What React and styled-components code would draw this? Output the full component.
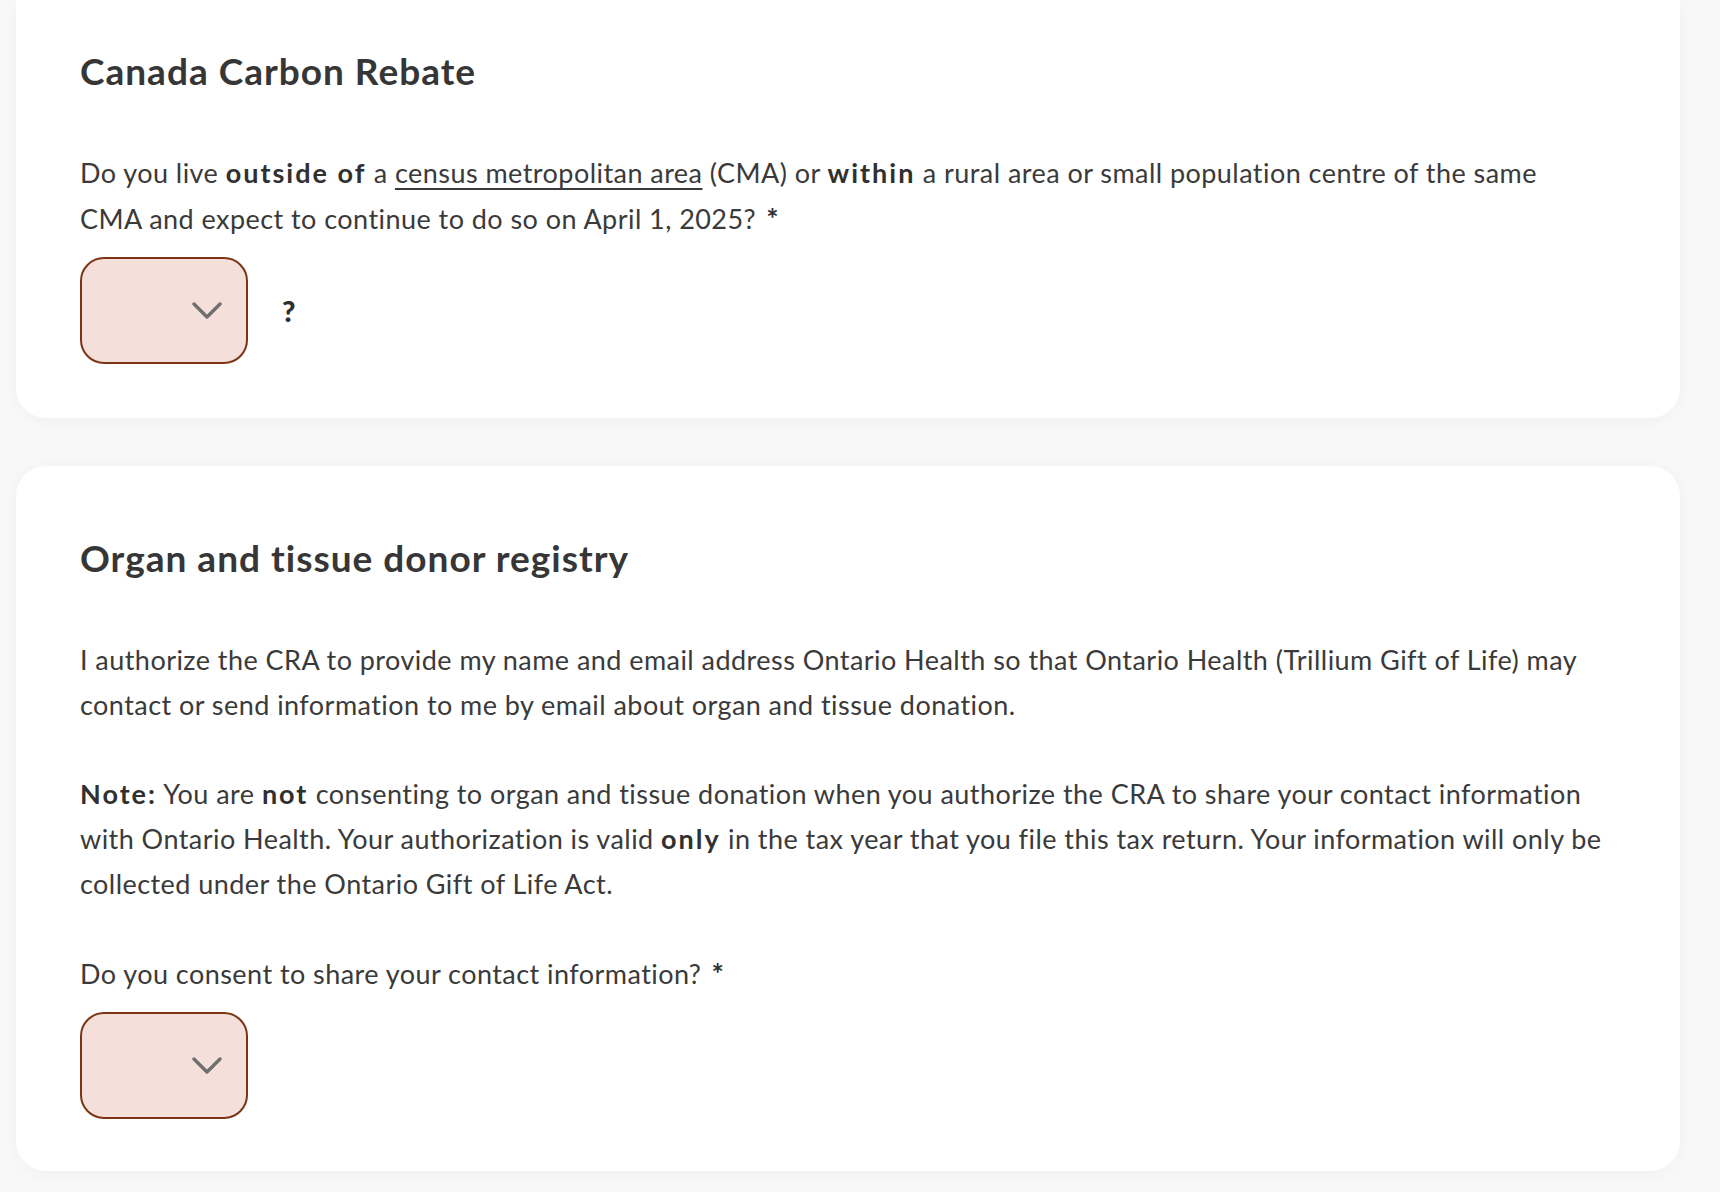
import React from 'react';
import styled, { createGlobalStyle } from 'styled-components';

const GlobalStyle = createGlobalStyle`
	html, body {
		margin: 0;
		padding: 0;
		background: #f8f8f8;
	}
	body {
		font-family: 'Lato', 'Noto Sans', sans-serif;
		color: #3a3a3a;
	}
`;

const Page = styled.div`
	display: flex;
	flex-direction: column;
	gap: 48px;
	padding: 0 40px 22px 16px;
	min-height: 1192px;
	box-sizing: border-box;
`;

const Card = styled.section`
	background: #ffffff;
	border-radius: ${(props) => (props.cut ? '0 0 30px 30px' : '30px')};
	box-shadow: 0 2px 18px rgba(0, 0, 0, 0.035);
	padding: ${(props) => (props.cut ? '47px 64px 54px' : '68px 64px 52px')};
`;

const Title = styled.h2`
	margin: 0 0 55px 0;
	font-size: 37px;
	line-height: 48px;
	font-weight: 700;
	color: #363636;
	letter-spacing: 1px;
`;

const Text = styled.p`
	margin: 0 0 ${(props) => props.gap || 44}px 0;
	font-size: 27px;
	line-height: 45px;
	font-weight: 400;
	letter-spacing: 0.45px;

	b {
		font-weight: 700;
		color: #303030;
		letter-spacing: 2px;
	}

	a {
		color: inherit;
		text-decoration: underline;
		text-decoration-thickness: 2px;
		text-underline-offset: 5px;
	}
`;

const Required = styled.b`
	margin-left: 10px;
	font-size: 29px;
	font-weight: 900;
`;

const FieldRow = styled.div`
	display: flex;
	align-items: center;
	gap: 34px;
`;

const SelectBox = styled.div`
	width: 168px;
	height: 107px;
	box-sizing: border-box;
	border: 2px solid #7b3515;
	border-radius: 24px;
	background: #f4dfdb;
	display: flex;
	align-items: center;
	justify-content: flex-end;
	padding-right: 24px;
`;

const Hint = styled.span`
	font-size: 29px;
	font-weight: 900;
	color: #2e2e2e;
`;

const Chevron = () => (
	<svg width="30" height="18" viewBox="0 0 30 18" fill="none">
		<path d="M2 2 L15 15 L28 2" stroke="#6f6f6f" strokeWidth="3.4" strokeLinecap="round" strokeLinejoin="round" />
	</svg>
);

function Select({ hint }) {
	return (
		<FieldRow>
			<SelectBox>
				<Chevron />
			</SelectBox>
			{hint && <Hint>{hint}</Hint>}
		</FieldRow>
	);
}

function App() {
	return (
		<>
			<GlobalStyle />
			<Page>
				<Card cut>
					<Title>Canada Carbon Rebate</Title>
					<Text gap={16}>
						Do you live <b>outside of</b> a <a href="#cma">census metropolitan area</a> (CMA) or{' '}
						<b>within</b> a rural area or small population centre of the same
						<br />
						CMA and expect to continue to do so on April 1, 2025?<Required>*</Required>
					</Text>
					<Select hint="?" />
				</Card>

				<Card>
					<Title>Organ and tissue donor registry</Title>
					<Text>
						I authorize the CRA to provide my name and email address Ontario Health so that Ontario
						Health (Trillium Gift of Life) may
						<br />
						contact or send information to me by email about organ and tissue donation.
					</Text>
					<Text>
						<b>Note:</b> You are <b>not</b> consenting to organ and tissue donation when you authorize
						the CRA to share your contact information
						<br />
						with Ontario Health. Your authorization is valid <b>only</b> in the tax year that you file
						this tax return. Your information will only be
						<br />
						collected under the Ontario Gift of Life Act.
					</Text>
					<Text gap={16}>
						Do you consent to share your contact information?<Required>*</Required>
					</Text>
					<Select />
				</Card>
			</Page>
		</>
	);
}

export default App;
